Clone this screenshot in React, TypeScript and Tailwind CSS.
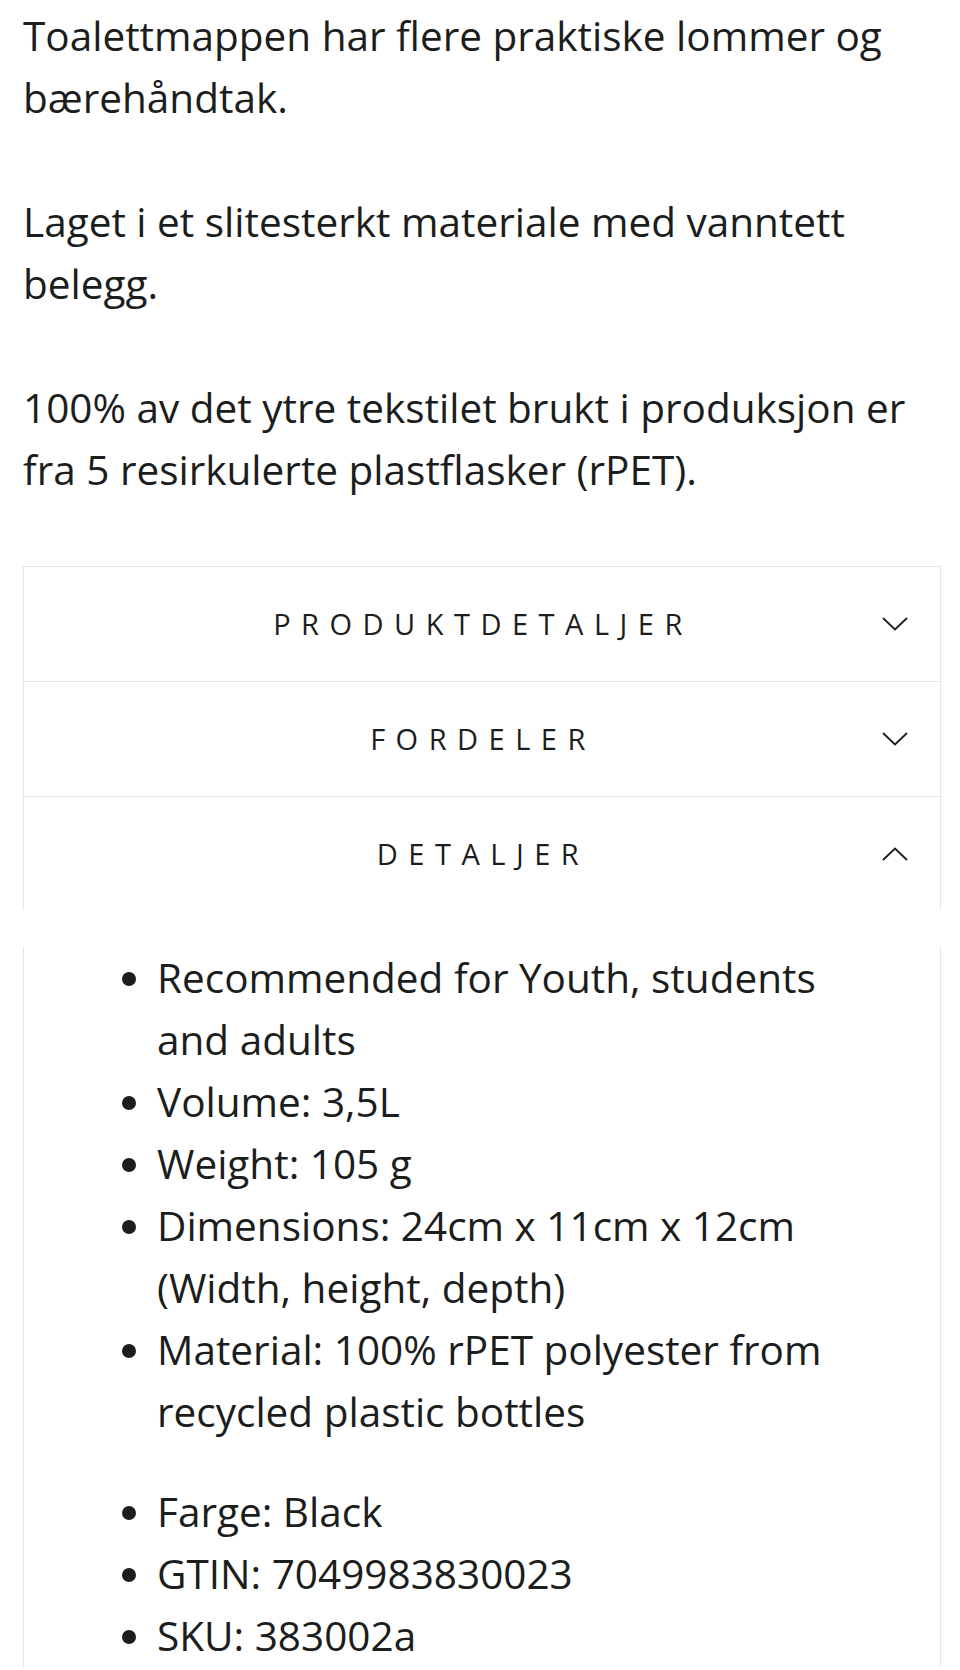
const sections = [
  { title: 'PRODUKTDETALJER', open: false },
  { title: 'FORDELER', open: false },
  { title: 'DETALJER', open: true },
];

const specs = [
  'Recommended for Youth, students and adults',
  'Volume: 3,5L',
  'Weight: 105 g',
  'Dimensions: 24cm x 11cm x 12cm (Width, height, depth)',
  'Material: 100% rPET polyester from recycled plastic bottles',
];

const meta = ['Farge: Black', 'GTIN: 7049983830023', 'SKU: 383002a'];

function Chevron({ up }: { up: boolean }) {
  return (
    <svg width="26" height="14" viewBox="0 0 26 14" fill="none" stroke="#1c1d1d" strokeWidth="1.8">
      {up ? <polyline points="1,13 13,1.5 25,13" /> : <polyline points="1,1 13,12.5 25,1" />}
    </svg>
  );
}

export default function App() {
  return (
    <div className="min-h-[1670px] bg-white pl-[23px] pr-[19px] pt-[5px] font-['Open_Sans',sans-serif] text-[#1c1d1d]">
      <div className="text-[40.5px] leading-[62px]">
        <p>Toalettmappen har flere praktiske lommer og bærehåndtak.</p>
        <p className="mt-[62px]">Laget i et slitesterkt materiale med vanntett belegg.</p>
        <p className="mt-[62px]">100% av det ytre tekstilet brukt i produksjon er fra 5 resirkulerte plastflasker (rPET).</p>
      </div>

      <div className="mt-[65px] border-t border-[#e8e8e1]">
        {sections.map((s) => (
          <div
            key={s.title}
            className={`relative flex items-center justify-center border-x border-[#e8e8e1] ${
              s.open ? 'h-[113px]' : 'h-[115px] border-b'
            }`}
          >
            <span className="text-[29px] tracking-[10.5px] pl-[2px]">{s.title}</span>
            <span className="absolute right-[32px] top-1/2 -translate-y-1/2 flex">
              <Chevron up={s.open} />
            </span>
          </div>
        ))}
      </div>

      <div className="h-[40px]" />

      <div className="min-h-[720px] border-x border-[#e8e8e1] pl-[133px] pr-[70px] text-[40.5px] leading-[62px]">
        <ul className="-mt-[3px] list-disc">
          {specs.map((t) => (
            <li key={t}>{t}</li>
          ))}
        </ul>
        <ul className="mt-[38px] list-disc">
          {meta.map((t) => (
            <li key={t}>{t}</li>
          ))}
        </ul>
      </div>
    </div>
  );
}
